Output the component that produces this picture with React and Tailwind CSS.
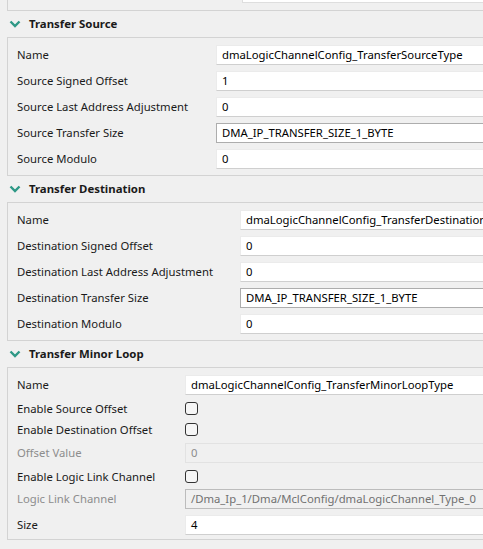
import React from 'react'

const FONT = { fontFamily: '"Noto Sans", "Open Sans", sans-serif' }

function Chevron() {
  return (
    <svg width="12" height="8" viewBox="0 0 12 8" className="shrink-0">
      <polyline points="1.5,1.5 6,6 10.5,1.5" fill="none" stroke="#2e9886" strokeWidth="2.4" strokeLinecap="butt" />
    </svg>
  )
}

function Header({ title }) {
  return (
    <div className="h-[26px] flex items-center gap-[8px] pl-[9px]">
      <Chevron />
      <span className="text-[11.4px] font-bold text-[#1a1a1a]">{title}</span>
    </div>
  )
}

function TextBox({ value, disabled }) {
  return (
    <div
      className={`flex-1 h-[20px] flex items-center pl-[5px] border border-r-0 whitespace-nowrap overflow-hidden ${
        disabled
          ? 'bg-[#f0f0f0] border-[#e2e2e2] text-[#8c8c8c]'
          : 'bg-white border-[#ebebeb] border-b-[#cfcfcf] text-black'
      }`}
    >
      {value}
    </div>
  )
}

function Select({ value, disabled }) {
  return (
    <div
      className={`flex-1 h-[20px] flex items-center pl-[5px] border border-r-0 whitespace-nowrap overflow-hidden ${
        disabled ? 'bg-[#f0f0f0] border-[#bcbcbc] text-[#707070]' : 'bg-white border-[#adadad] text-black'
      }`}
    >
      {value}
    </div>
  )
}

function CheckBox() {
  return <div className="w-[13px] h-[13px] rounded-[3px] border border-[#333333] bg-[#f6f6f6]" />
}

function Row({ label, labelW, disabled, children, className = '' }) {
  return (
    <div className={`flex items-center ${className}`}>
      <span
        className={`shrink-0 whitespace-nowrap ${disabled ? 'text-[#8d8d8d]' : 'text-[#1a1a1a]'}`}
        style={{ width: labelW }}
      >
        {label}
      </span>
      {children}
    </div>
  )
}

function Panel({ children, className = '' }) {
  return (
    <div className={`ml-[7px] border border-r-0 border-[#d3d3d3] pl-[9px] pt-[7px] flex flex-col ${className}`}>
      {children}
    </div>
  )
}

export default function App() {
  const sourceRows = [
    ['Name', 'dmaLogicChannelConfig_TransferSourceType'],
    ['Source Signed Offset', '1'],
    ['Source Last Address Adjustment', '0'],
    ['Source Transfer Size', 'DMA_IP_TRANSFER_SIZE_1_BYTE', true],
    ['Source Modulo', '0'],
  ]
  const destRows = [
    ['Name', 'dmaLogicChannelConfig_TransferDestinationType'],
    ['Destination Signed Offset', '0'],
    ['Destination Last Address Adjustment', '0'],
    ['Destination Transfer Size', 'DMA_IP_TRANSFER_SIZE_1_BYTE', true],
    ['Destination Modulo', '0'],
  ]

  return (
    <div className="w-[483px] h-[549px] overflow-hidden bg-[#f0f0f0] text-[11.3px] leading-none" style={FONT}>
      {/* top panel (cut off) */}
      <div className="ml-[7px] h-[11px] border-l border-b border-[#d3d3d3] flex">
        <div className="ml-[234px] flex-1 h-[3px] bg-white border-l border-b border-[#dedede]" />
      </div>

      <Header title="Transfer Source" />
      <Panel className="gap-[6px] pb-[6px]">
        {sourceRows.map(([label, value, sel]) => (
          <Row key={label} label={label} labelW={199}>
            {sel ? <Select value={value} /> : <TextBox value={value} />}
          </Row>
        ))}
      </Panel>

      <Header title="Transfer Destination" />
      <Panel className="gap-[6px] pb-[6px]">
        {destRows.map(([label, value, sel]) => (
          <Row key={label} label={label} labelW={223}>
            {sel ? <Select value={value} /> : <TextBox value={value} />}
          </Row>
        ))}
      </Panel>

      <Header title="Transfer Minor Loop" />
      <Panel className="pb-[4px]">
        <Row label="Name" labelW={168}>
          <TextBox value="dmaLogicChannelConfig_TransferMinorLoopType" />
        </Row>
        <Row label="Enable Source Offset" labelW={168} className="mt-[7px]">
          <CheckBox />
        </Row>
        <Row label="Enable Destination Offset" labelW={168} className="mt-[8px]">
          <CheckBox />
        </Row>
        <Row label="Offset Value" labelW={168} disabled className="mt-[7px]">
          <TextBox value="0" disabled />
        </Row>
        <Row label="Enable Logic Link Channel" labelW={168} className="mt-[7px]">
          <CheckBox />
        </Row>
        <Row label="Logic Link Channel" labelW={168} disabled className="mt-[6px]">
          <Select value="/Dma_Ip_1/Dma/MclConfig/dmaLogicChannel_Type_0" disabled />
        </Row>
        <Row label="Size" labelW={168} className="mt-[6px]">
          <TextBox value="4" />
        </Row>
      </Panel>
    </div>
  )
}
